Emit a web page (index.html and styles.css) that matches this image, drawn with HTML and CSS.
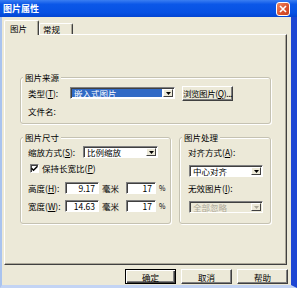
FILE: index.html
```html
<!DOCTYPE html>
<html>
<head>
  <meta charset="utf-8">
  <title>图片属性</title>
<link rel="stylesheet" href="styles.css">
</head>
<body>
 <div class="window">
  <div class="titlebar">
   <span class="title">图片属性</span>
   <span class="close"><svg width="8" height="8" viewBox="0 0 8 8"><path d="M1 1L7 7M7 1L1 7" stroke="#fff" stroke-width="1.6"/></svg></span>
  </div>
  <div class="frame">
   <div class="tabs">
    <div class="tab active">图片</div>
    <div class="tab">常规</div>
   </div>
   <div class="panel">
    <div class="group g-source">
     <span class="legend">图片来源</span>
     <div class="row r-type">
      <span class="lbl w-type">类型(<u>T</u>):</span>
      <div class="select s-type"><span class="val sel">嵌入式图片</span><span class="arrow"><svg width="5" height="3" viewBox="0 0 5 3"><path d="M0 0H5L2.5 3Z" fill="#000"/></svg></span></div>
      <div class="btn b-browse">浏览图片(<u>Q</u>)...</div>
     </div>
     <div class="row r-file"><span class="lbl">文件名:</span></div>
    </div>
    <div class="groups">
     <div class="group g-size">
      <span class="legend">图片尺寸</span>
      <div class="row">
       <span class="lbl w-scale">缩放方式(<u>S</u>):</span>
       <div class="select s-scale"><span class="val">比例缩放</span><span class="arrow"><svg width="5" height="3" viewBox="0 0 5 3"><path d="M0 0H5L2.5 3Z" fill="#000"/></svg></span></div>
      </div>
      <div class="row r-check">
       <span class="check"><svg width="7" height="7" viewBox="0 0 7 7"><path d="M0.5 3.2L2.5 5.2L6.5 1.2" stroke="#000" stroke-width="1.5" fill="none"/></svg></span>
       <span class="lbl">保持长宽比(<u>P</u>)</span>
      </div>
      <div class="row r-dim">
       <span class="lbl w-dim">高度(<u>H</u>):</span>
       <span class="input i-mm">9.17</span>
       <span class="unit">毫米</span>
       <span class="input i-pct">17</span>
       <span class="pct">%</span>
      </div>
      <div class="row r-dim r-dim2">
       <span class="lbl w-dim">宽度(<u>W</u>):</span>
       <span class="input i-mm">14.63</span>
       <span class="unit">毫米</span>
       <span class="input i-pct">17</span>
       <span class="pct">%</span>
      </div>
     </div>
     <div class="group g-proc">
      <span class="legend">图片处理</span>
      <div class="row r-plbl">对齐方式(<u>A</u>):</div>
      <div class="select s-proc"><span class="val">中心对齐</span><span class="arrow"><svg width="5" height="3" viewBox="0 0 5 3"><path d="M0 0H5L2.5 3Z" fill="#000"/></svg></span></div>
      <div class="row r-plbl r-plbl2">无效图片(<u>I</u>):</div>
      <div class="select s-proc disabled"><span class="val">全部忽略</span><span class="arrow"><svg width="5" height="3" viewBox="0 0 5 3"><path d="M0 0H5L2.5 3Z" fill="#ACA899"/></svg></span></div>
     </div>
    </div>
   </div>
   <div class="buttons">
    <div class="btn default">确定</div>
    <div class="btn">取消</div>
    <div class="btn">帮助</div>
   </div>
  </div>
 </div>
</body>
</html>
```

FILE: styles.css
```css
*,*:before,*:after {box-sizing:border-box;}
body{
 margin:0;
 width:297px;
 height:288px;
 overflow:hidden;
 background:#ECE9D8;
 font:8.5px/12px "Noto Sans CJK SC","Noto Sans",sans-serif;
 color:#000;
}
u{text-decoration:underline;text-underline-offset:1px;}
.window{
 display:flex;
 flex-direction:column;
 width:297px;
 height:288px;
}
.titlebar{
 flex:none;
 height:17px;
 display:flex;
 align-items:center;
 justify-content:space-between;
 padding:0 7px 0 3px;
 background:linear-gradient(#3A7EF2,#0B57E8 25%,#0651E3 75%,#0345D2);
}
.title{
 color:#fff;
 font-weight:bold;
 font-size:9px;
 line-height:12px;
}
.close{
 width:14px;
 height:14px;
 display:flex;
 align-items:center;
 justify-content:center;
 border:1px solid #fff;
 border-radius:3px;
 background:linear-gradient(135deg,#F08A62,#D9502C 60%,#C8401E);
}
.frame{
 flex:1;
 display:flex;
 flex-direction:column;
 border-left:2px solid #A9C3EF;
 border-right:6px solid #1D46D3;
 border-bottom:3px solid #C3D4F4;
}
.tabs{
 display:flex;
 align-items:flex-end;
 height:14px;
 margin:3px 0 0 2px;
}
.tab{
 width:34px;
 height:11px;
 padding-left:3px;
 border:1px solid;
 border-color:#fff #404040 transparent #fff;
 border-bottom:none;
 border-radius:2px 2px 0 0;
 box-shadow:inset -1px 0 0 #ACA899;
 line-height:10px;
}
.tab.active{
 position:relative;
 z-index:1;
 width:35px;
 height:15px;
 margin-bottom:-1px;
 padding:1px 0 0 5px;
 background:#ECE9D8;
 line-height:12px;
}
.panel{
 width:283px;
 height:231px;
 margin-left:2px;
 border:1px solid;
 border-color:#fff #404040 #404040 #fff;
 box-shadow:inset -1px -1px 0 #ACA899;
 padding:42px 15px 0 15px;
}
.group{
 position:relative;
 border:1px solid #C5C2B2;
 border-radius:3px;
 box-shadow:inset 1px 1px 0 #fff, 1px 1px 0 #fff;
}
.legend{
 position:absolute;
 top:-7px;
 left:2px;
 padding:0 2px;
 background:#ECE9D8;
 line-height:12px;
}
.row{
 display:flex;
 align-items:center;
 height:12px;
 white-space:nowrap;
}
.g-source{
 height:47px;
 padding:6px 0 0 7px;
}
.r-type{height:18px;}
.w-type{width:42px;}
.s-type{width:105px;}
.r-file{height:14px;margin-top:2px;}
.b-browse{
 width:76px;
 height:18px;
 margin-left:7px;
 letter-spacing:-0.4px;
}
.select{
 display:flex;
 align-items:stretch;
 height:12px;
 padding:1px;
 background:#fff;
 border:1px solid;
 border-color:#808080 #fff #fff #808080;
 box-shadow:inset 1px 1px 0 #404040;
}
.select .val{
 flex:1;
 padding-left:2px;
 line-height:8px;
 white-space:nowrap;
}
.select .val.sel{
 background:#316AC5;
 color:#fff;
 margin-right:1px;
}
.select .arrow{
 width:10px;
 display:flex;
 align-items:center;
 justify-content:center;
 background:#ECE9D8;
 border:1px solid;
 border-color:#fff #404040 #404040 #fff;
}
.select.disabled{background:#ECE9D8;}
.select.disabled .val{color:#ACA899;}
.groups{
 display:flex;
 gap:8px;
 margin-top:13px;
}
.g-size{
 width:151px;
 height:87px;
 padding:8px 0 0 7px;
}
.w-scale{width:55px;}
.s-scale{width:75px;}
.r-check{margin-top:4px;}
.check{
 width:9px;
 height:9px;
 margin:0 3px 0 2px;
 display:flex;
 align-items:center;
 justify-content:center;
 background:#fff;
 border:1px solid;
 border-color:#808080 #fff #fff #808080;
 box-shadow:inset 1px 1px 0 #404040;
}
.r-dim{margin-top:8px;}
.r-dim2{margin-top:6px;}
.w-dim{width:37px;}
.input{
 height:12px;
 background:#fff;
 border:1px solid;
 border-color:#808080 #fff #fff #808080;
 box-shadow:inset 1px 1px 0 #404040;
 text-align:right;
 padding-right:3px;
 line-height:10px;
}
.i-mm{width:34px;}
.i-pct{width:30px;margin-left:3px;}
.unit{width:24px;padding-left:3px;}
.pct{margin-left:3px;font-size:7px;}
.g-proc{
 width:92px;
 height:87px;
 padding:8px 0 0 8px;
}
.s-proc{width:74px;margin-left:1px;margin-top:7px;}
.r-plbl2{margin-top:5px;}
.btn{
 display:flex;
 align-items:center;
 justify-content:center;
 width:51px;
 height:15px;
 white-space:nowrap;
 border:1px solid;
 border-color:#fff #404040 #404040 #fff;
 box-shadow:inset -1px -1px 0 #808080;
 background:#ECE9D8;
}
.btn.default{
 border-color:#000;
 box-shadow:inset 1px 1px 0 #fff, inset -1px -1px 0 #404040, inset -2px -2px 0 #808080;
}
.buttons{
 display:flex;
 justify-content:flex-end;
 gap:5px;
 margin-top:4px;
 padding-right:3px;
}
```
